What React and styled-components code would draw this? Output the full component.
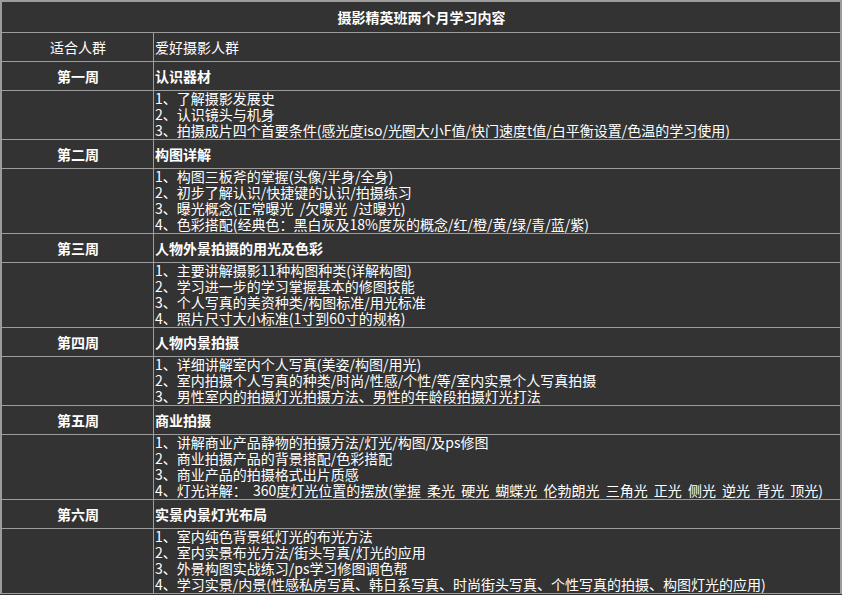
import React from 'react';
import styled, { createGlobalStyle } from 'styled-components';

const colors = {
  bg: '#333333',
  line: '#9c9c9c',
  text: '#ffffff',
};

const GlobalStyle = createGlobalStyle`
  html, body {
    margin: 0;
    padding: 0;
    background: ${colors.bg};
  }
  body {
    padding: 1px 0 0 1px;
    font-family: "Noto Sans CJK SC", "Noto Sans", sans-serif;
    color: ${colors.text};
  }
`;

const Table = styled.table`
  width: 840px;
  border-collapse: collapse;
  border: 1px solid ${colors.line};
  outline: 1px solid ${colors.line};
  background: ${colors.bg};
  table-layout: fixed;
`;

const Cell = styled.td`
  border: 1px solid ${colors.line};
  padding: 0 0 0 1px;
  height: ${({ tall }) => (tall ? '30px' : '28px')};
  font-size: 14px;
  line-height: 16px;
  font-weight: ${({ bold }) => (bold ? 700 : 400)};
  text-align: ${({ center }) => (center ? 'center' : 'left')};
  vertical-align: middle;
  white-space: pre;
  word-spacing: 3px;
`;

const ListCell = styled(Cell)`
  height: auto;
  vertical-align: top;
`;

const Line = styled.div`
  line-height: 16px;
  height: 16px;
  margin-top: -1px;
  margin-bottom: 1px;
`;

const weeks = [
  {
    name: '第一周',
    title: '认识器材',
    items: [
      '1、了解摄影发展史',
      '2、认识镜头与机身',
      '3、拍摄成片四个首要条件(感光度iso/光圈大小F值/快门速度t值/白平衡设置/色温的学习使用)',
    ],
  },
  {
    name: '第二周',
    title: '构图详解',
    items: [
      '1、构图三板斧的掌握(头像/半身/全身)',
      '2、初步了解认识/快捷键的认识/拍摄练习',
      '3、曝光概念(正常曝光 /欠曝光 /过曝光)',
      '4、色彩搭配(经典色：黑白灰及18%度灰的概念/红/橙/黄/绿/青/蓝/紫)',
    ],
  },
  {
    name: '第三周',
    title: '人物外景拍摄的用光及色彩',
    items: [
      '1、主要讲解摄影11种构图种类(详解构图)',
      '2、学习进一步的学习掌握基本的修图技能',
      '3、个人写真的美资种类/构图标准/用光标准',
      '4、照片尺寸大小标准(1寸到60寸的规格)',
    ],
  },
  {
    name: '第四周',
    title: '人物内景拍摄',
    items: [
      '1、详细讲解室内个人写真(美姿/构图/用光)',
      '2、室内拍摄个人写真的种类/时尚/性感/个性/等/室内实景个人写真拍摄',
      '3、男性室内的拍摄灯光拍摄方法、男性的年龄段拍摄灯光打法',
    ],
  },
  {
    name: '第五周',
    title: '商业拍摄',
    items: [
      '1、讲解商业产品静物的拍摄方法/灯光/构图/及ps修图',
      '2、商业拍摄产品的背景搭配/色彩搭配',
      '3、商业产品的拍摄格式出片质感',
      '4、灯光详解： 360度灯光位置的摆放(掌握 柔光 硬光 蝴蝶光 伦勃朗光 三角光 正光 侧光 逆光 背光 顶光)',
    ],
  },
  {
    name: '第六周',
    title: '实景内景灯光布局',
    items: [
      '1、室内纯色背景纸灯光的布光方法',
      '2、室内实景布光方法/街头写真/灯光的应用',
      '3、外景构图实战练习/ps学习修图调色帮',
      '4、学习实景/内景(性感私房写真、韩日系写真、时尚街头写真、个性写真的拍摄、构图灯光的应用)',
    ],
  },
];

const App = () => (
  <>
    <GlobalStyle />
    <Table>
      <colgroup>
        <col style={{ width: '152px' }} />
        <col />
      </colgroup>
      <tbody>
        <tr>
          <Cell colSpan={2} center bold tall>
            摄影精英班两个月学习内容
          </Cell>
        </tr>
        <tr>
          <Cell center>适合人群</Cell>
          <Cell>爱好摄影人群</Cell>
        </tr>
        {weeks.map((week) => (
          <React.Fragment key={week.name}>
            <tr>
              <Cell center bold>{week.name}</Cell>
              <Cell bold>{week.title}</Cell>
            </tr>
            <tr>
              <ListCell />
              <ListCell>
                {week.items.map((item) => (
                  <Line key={item}>{item}</Line>
                ))}
              </ListCell>
            </tr>
          </React.Fragment>
        ))}
      </tbody>
    </Table>
  </>
);

export default App;
